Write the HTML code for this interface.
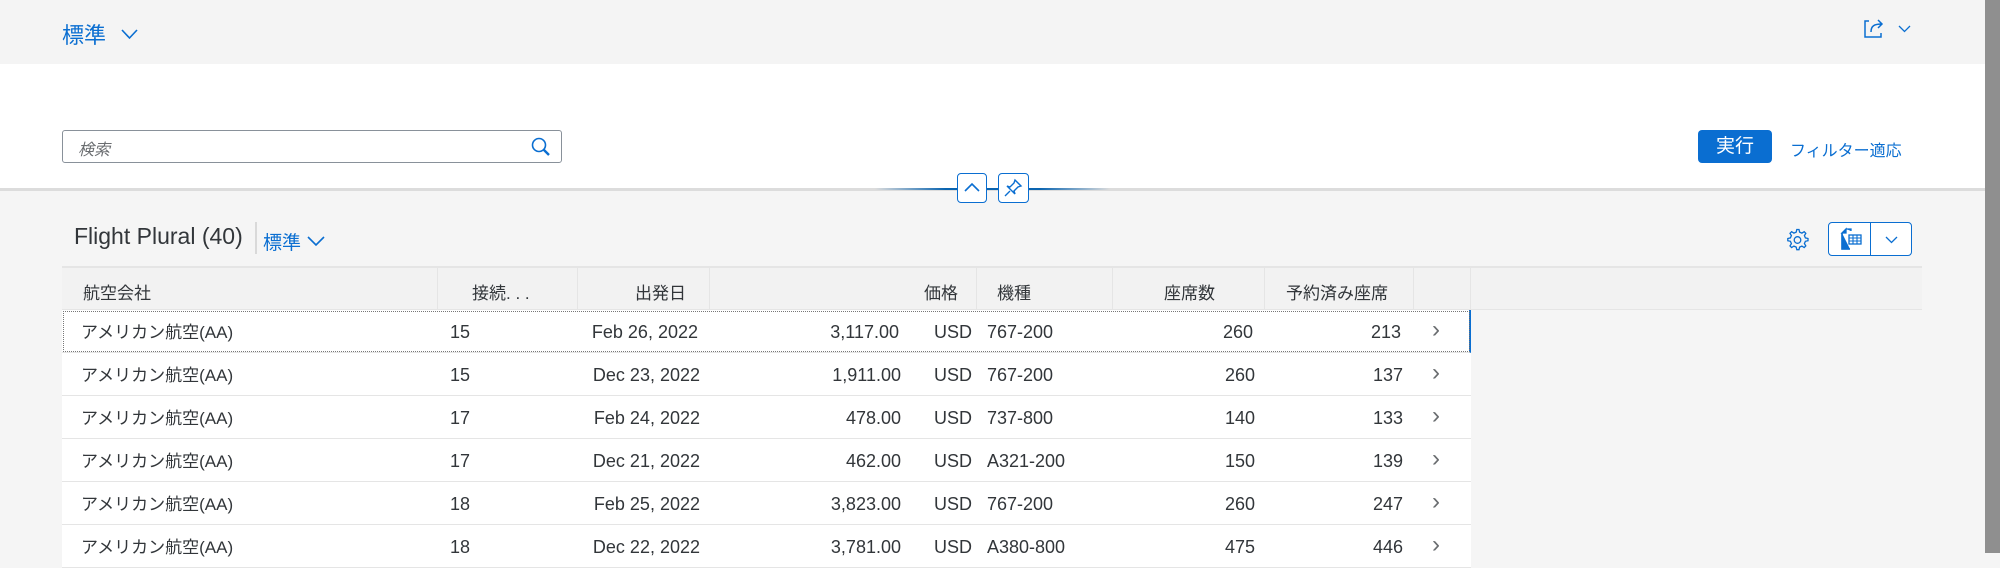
<!DOCTYPE html>
<html><head><meta charset="utf-8"><style>
*{margin:0;padding:0;box-sizing:border-box}
body{width:2000px;height:553px;overflow:hidden;background:#f5f5f5;font-family:"Liberation Sans","Noto Sans CJK JP",sans-serif;color:#32363a;position:relative}
.a{position:absolute;white-space:nowrap}
.blue{color:#0a6ed1}
.row{position:absolute;left:62px;width:1409px;height:43px;background:#fff;border-bottom:1px solid #e5e5e5;font-size:18px}
.row span{position:absolute;top:12px;line-height:20px}
.row span.j{font-size:17px;top:13px}
.row span.c{left:1370px;top:10px;font-size:24px;color:#6a6d70;font-weight:300}
.r{text-align:right}
</style></head><body>
<div class="a" style="left:0;top:0;width:1985px;height:64px;background:#f4f4f4"></div>
<div class="a blue" style="left:62px;top:18px;font-size:22px">標準</div>
<svg class="a" style="left:121px;top:29px" width="17" height="11"><path d="M1 1 L8.5 9 L16 1" fill="none" stroke="#0a6ed1" stroke-width="1.6"/></svg>
<svg class="a" style="left:1863px;top:17px" width="24" height="22"><path d="M6 4 H2 V20 H18 V16" fill="none" stroke="#0a6ed1" stroke-width="1.5"/><path d="M8 15 C8 9 11 7 19 7 M15 3 L19 7 L15 11" fill="none" stroke="#0a6ed1" stroke-width="1.5"/></svg>
<svg class="a" style="left:1898px;top:25px" width="13" height="8"><path d="M1 1 L6.5 6.5 L12 1" fill="none" stroke="#0a6ed1" stroke-width="1.3"/></svg>
<div class="a" style="left:0;top:64px;width:1985px;height:124px;background:#fff"></div>
<div class="a" style="left:0;top:188px;width:1985px;height:3px;background:#dcdcdc"></div>
<div class="a" style="left:62px;top:130px;width:500px;height:33px;border:1px solid #89919a;border-radius:3px;background:#fff"></div>
<div class="a" style="left:78px;top:136px;font-size:16px;color:#6a6d70;font-style:italic">検索</div>
<svg class="a" style="left:530px;top:136px" width="22" height="22"><circle cx="9" cy="9" r="6.5" fill="none" stroke="#0a6ed1" stroke-width="1.6"/><path d="M13.5 13.5 L19 19" stroke="#0a6ed1" stroke-width="2.4"/></svg>
<div class="a" style="left:1698px;top:130px;width:74px;height:33px;background:#0a6ed1;border-radius:4px;color:#fff;font-size:19px;text-align:center;line-height:33px">実行</div>
<div class="a blue" style="left:1790px;top:137px;font-size:16px">フィルター適応</div>
<div class="a" style="left:875px;top:188px;width:235px;height:2px;background:linear-gradient(90deg,rgba(10,110,209,0),#0a64b0 30%,#0a64b0 70%,rgba(10,110,209,0))"></div>
<div class="a" style="left:957px;top:173px;width:30px;height:30px;background:#fff;border:1px solid #0a6ed1;border-radius:4px"></div>
<svg class="a" style="left:962px;top:180px" width="20" height="14"><path d="M3 11 L10 4 L17 11" fill="none" stroke="#0a6ed1" stroke-width="1.6"/></svg>
<div class="a" style="left:998px;top:173px;width:31px;height:30px;background:#fff;border:1px solid #0a6ed1;border-radius:4px"></div>
<svg class="a" style="left:1003px;top:178px" width="20" height="20"><path d="M12 2 L18 8 L15 9 L11 13 L12 16 L4 8 L7 9 L11 5 Z M7 13 L2 18" fill="none" stroke="#0a6ed1" stroke-width="1.4"/></svg>
<div class="a" style="left:74px;top:223px;font-size:23px">Flight Plural (40)</div>
<div class="a" style="left:255px;top:222px;width:2px;height:32px;background:#d9d9d9"></div>
<div class="a blue" style="left:263px;top:228px;font-size:19px">標準</div>
<svg class="a" style="left:307px;top:236px" width="18" height="11"><path d="M1 1 L9 9 L17 1" fill="none" stroke="#0a6ed1" stroke-width="1.6"/></svg>
<svg class="a" style="left:1785px;top:227px" width="24" height="24" viewBox="0 0 24 24"><path d="M12 2.5 l2 0 .6 2.6 2.3 1 2.3-1.4 1.6 1.6-1.4 2.3 1 2.3 2.6.6v2.2l-2.6.6-1 2.3 1.4 2.3-1.6 1.6-2.3-1.4-2.3 1-.6 2.6h-2.2l-.6-2.6-2.3-1-2.3 1.4-1.6-1.6 1.4-2.3-1-2.3-2.6-.6v-2.2l2.6-.6 1-2.3-1.4-2.3 1.6-1.6 2.3 1.4 2.3-1 .6-2.6z" fill="none" stroke="#0a6ed1" stroke-width="1.3"/><circle cx="12.5" cy="13" r="3.3" fill="none" stroke="#0a6ed1" stroke-width="1.3"/></svg>
<div class="a" style="left:1828px;top:222px;width:84px;height:34px;border:1px solid #0a6ed1;border-radius:4px;background:#fff"></div>
<div class="a" style="left:1870px;top:222px;width:1px;height:34px;background:#0a6ed1"></div>
<svg class="a" style="left:1838px;top:227px" width="26" height="26"><path d="M8 2 H13 V4 M4 6 V22 H12 M4 6 L8 2 V6 Z" fill="#0a6ed1" stroke="#0a6ed1" stroke-width="1.3"/><path d="M4 6 V22 H12" fill="none" stroke="#0a6ed1" stroke-width="1.5"/><rect x="11" y="8" width="12" height="9" fill="none" stroke="#0a6ed1" stroke-width="1.3"/><path d="M11 11 H23 M11 14 H23 M15 8 V17 M19 8 V17" stroke="#0a6ed1" stroke-width="1.1"/></svg>
<svg class="a" style="left:1885px;top:236px" width="13" height="8"><path d="M1 1 L6.5 6.5 L12 1" fill="none" stroke="#0a6ed1" stroke-width="1.3"/></svg>
<div class="a" style="left:62px;top:266px;width:1860px;height:44px;background:#f2f2f2;border-top:2px solid #e5e5e5;border-bottom:1px solid #e5e5e5"></div>
<div class="a" style="left:437px;top:268px;width:1px;height:42px;background:#e5e5e5"></div>
<div class="a" style="left:577px;top:268px;width:1px;height:42px;background:#e5e5e5"></div>
<div class="a" style="left:709px;top:268px;width:1px;height:42px;background:#e5e5e5"></div>
<div class="a" style="left:976px;top:268px;width:1px;height:42px;background:#e5e5e5"></div>
<div class="a" style="left:1112px;top:268px;width:1px;height:42px;background:#e5e5e5"></div>
<div class="a" style="left:1264px;top:268px;width:1px;height:42px;background:#e5e5e5"></div>
<div class="a" style="left:1413px;top:268px;width:1px;height:42px;background:#e5e5e5"></div>
<div class="a" style="left:1470px;top:268px;width:1px;height:42px;background:#e5e5e5"></div>
<div class="a" style="left:83px;top:279px;font-size:17px">航空会社</div>
<div class="a" style="left:472px;top:279px;font-size:17px">接続. . .</div>
<div class="a" style="left:635px;top:279px;font-size:17px">出発日</div>
<div class="a" style="left:924px;top:279px;font-size:17px">価格</div>
<div class="a" style="left:997px;top:279px;font-size:17px">機種</div>
<div class="a" style="left:1164px;top:279px;font-size:17px">座席数</div>
<div class="a" style="left:1286px;top:279px;font-size:17px">予約済み座席</div>

<div class="row" style="top:310px;outline:1px dotted #777;outline-offset:-2px;border-right:2px solid #0a6ed1"><span class="j" style="left:19px">アメリカン航空(AA)</span><span style="left:388px">15</span><span class="r" style="right:771px">Feb 26, 2022</span><span class="r" style="right:570px">3,117.00</span><span style="left:872px">USD</span><span style="left:925px">767-200</span><span class="r" style="right:216px">260</span><span class="r" style="right:68px">213</span><span class="c">&#8250;</span></div>
<div class="row" style="top:353px"><span class="j" style="left:19px">アメリカン航空(AA)</span><span style="left:388px">15</span><span class="r" style="right:771px">Dec 23, 2022</span><span class="r" style="right:570px">1,911.00</span><span style="left:872px">USD</span><span style="left:925px">767-200</span><span class="r" style="right:216px">260</span><span class="r" style="right:68px">137</span><span class="c">&#8250;</span></div>
<div class="row" style="top:396px"><span class="j" style="left:19px">アメリカン航空(AA)</span><span style="left:388px">17</span><span class="r" style="right:771px">Feb 24, 2022</span><span class="r" style="right:570px">478.00</span><span style="left:872px">USD</span><span style="left:925px">737-800</span><span class="r" style="right:216px">140</span><span class="r" style="right:68px">133</span><span class="c">&#8250;</span></div>
<div class="row" style="top:439px"><span class="j" style="left:19px">アメリカン航空(AA)</span><span style="left:388px">17</span><span class="r" style="right:771px">Dec 21, 2022</span><span class="r" style="right:570px">462.00</span><span style="left:872px">USD</span><span style="left:925px">A321-200</span><span class="r" style="right:216px">150</span><span class="r" style="right:68px">139</span><span class="c">&#8250;</span></div>
<div class="row" style="top:482px"><span class="j" style="left:19px">アメリカン航空(AA)</span><span style="left:388px">18</span><span class="r" style="right:771px">Feb 25, 2022</span><span class="r" style="right:570px">3,823.00</span><span style="left:872px">USD</span><span style="left:925px">767-200</span><span class="r" style="right:216px">260</span><span class="r" style="right:68px">247</span><span class="c">&#8250;</span></div>
<div class="row" style="top:525px"><span class="j" style="left:19px">アメリカン航空(AA)</span><span style="left:388px">18</span><span class="r" style="right:771px">Dec 22, 2022</span><span class="r" style="right:570px">3,781.00</span><span style="left:872px">USD</span><span style="left:925px">A380-800</span><span class="r" style="right:216px">475</span><span class="r" style="right:68px">446</span><span class="c">&#8250;</span></div>
<div class="a" style="left:1985px;top:0;width:15px;height:553px;background:#8f8f8f"></div>
</body></html>
